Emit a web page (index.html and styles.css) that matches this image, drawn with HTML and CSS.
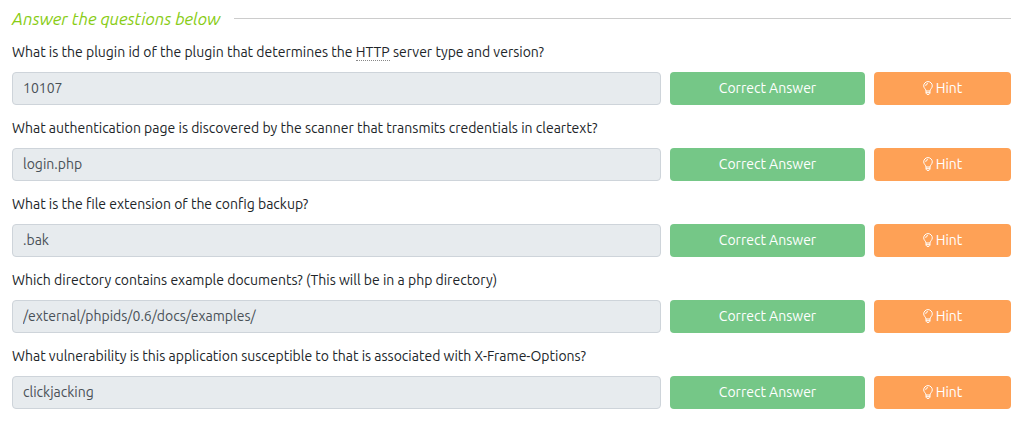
FILE: index.html
```
<!DOCTYPE html>
<html lang="en">

<head>
    <meta charset="utf-8">
    <meta name="viewport" content="width=device-width, initial-scale=1">
    <title>Questions</title>
    <link rel="stylesheet" href="styles.css">
</head>

<body>
    <svg class="sprite" aria-hidden="true">
        <symbol id="bulb" viewBox="0 0 10 16">
            <path d="M3 10C3 8.300.7 7.100.7 4.900A4.300 4.300 0 0 1 9.300 4.900C9.300 7.100 7 8.300 7 10Z" />
            <path d="M3 10v2.200l1 1.200h2l1-1.200V10M3 11.700h4M2.700 4.900A2.300 2.300 0 0 1 5 2.600" />
        </symbol>
    </svg>

    <main class="questions">
        <h2 class="title">Answer the questions below</h2>

        <form class="question">
            <label for="answer1">What is the plugin id of the plugin that determines the <abbr>HTTP</abbr> server type and version?</label>
            <div class="row">
                <input class="answer" id="answer1" type="text" value="10107" disabled>
                <button class="btn correct" type="button">Correct Answer</button>
                <button class="btn hint" type="button"><svg class="icon" aria-hidden="true"><use href="#bulb" /></svg>Hint</button>
            </div>
        </form>

        <form class="question">
            <label for="answer2">What authentication page is discovered by the scanner that transmits credentials in cleartext?</label>
            <div class="row">
                <input class="answer" id="answer2" type="text" value="login.php" disabled>
                <button class="btn correct" type="button">Correct Answer</button>
                <button class="btn hint" type="button"><svg class="icon" aria-hidden="true"><use href="#bulb" /></svg>Hint</button>
            </div>
        </form>

        <form class="question">
            <label for="answer3">What is the file extension of the config backup?</label>
            <div class="row">
                <input class="answer" id="answer3" type="text" value=".bak" disabled>
                <button class="btn correct" type="button">Correct Answer</button>
                <button class="btn hint" type="button"><svg class="icon" aria-hidden="true"><use href="#bulb" /></svg>Hint</button>
            </div>
        </form>

        <form class="question">
            <label for="answer4">Which directory contains example documents? (This will be in a php directory)</label>
            <div class="row">
                <input class="answer" id="answer4" type="text" value="/external/phpids/0.6/docs/examples/" disabled>
                <button class="btn correct" type="button">Correct Answer</button>
                <button class="btn hint" type="button"><svg class="icon" aria-hidden="true"><use href="#bulb" /></svg>Hint</button>
            </div>
        </form>

        <form class="question">
            <label for="answer5">What vulnerability is this application susceptible to that is associated with X-Frame-Options?</label>
            <div class="row">
                <input class="answer" id="answer5" type="text" value="clickjacking" disabled>
                <button class="btn correct" type="button">Correct Answer</button>
                <button class="btn hint" type="button"><svg class="icon" aria-hidden="true"><use href="#bulb" /></svg>Hint</button>
            </div>
        </form>
    </main>
</body>

</html>
```
FILE: styles.css
```
* {
    box-sizing: border-box;
}

body {
    margin: 0;
    background: #fff;
    color: #212529;
    font-family: Ubuntu, "Noto Sans", sans-serif;
    font-size: 14px;
    line-height: 23px;
}

.sprite {
    display: none;
}

.questions {
    padding: 7px 13px 12px 12px;
}

.title {
    display: flex;
    align-items: center;
    gap: 14px;
    margin: 0 0 11px;
    color: #88cc14;
    font-size: 17px;
    font-style: italic;
    font-weight: 400;
}

.title::after {
    content: "";
    flex: 1;
    height: 1px;
    background: #ccc;
}

.question {
    margin-bottom: 12px;
}

.question label {
    display: block;
    margin-bottom: 8px;
}

abbr {
    border-bottom: 1px dotted #888;
}

.row {
    display: grid;
    grid-template-columns: 649fr 195fr 137fr;
    gap: 9px;
}

.answer,
.btn {
    min-width: 0;
    height: 33px;
    border: 1px solid transparent;
    border-radius: 4px;
    font: inherit;
}

.answer {
    padding: 0 10px 2px;
    background: #e7ebee;
    border-color: #ced4da;
    color: #495057;
}

.btn {
    display: flex;
    align-items: center;
    justify-content: center;
    gap: 3px;
    padding: 0 8px;
    color: #fff;
}

.correct {
    background: #75c787;
}

.hint {
    background: #fea156;
}

.icon {
    width: 10px;
    height: 16px;
    fill: none;
    stroke: currentColor;
    stroke-width: 1;
}
```
